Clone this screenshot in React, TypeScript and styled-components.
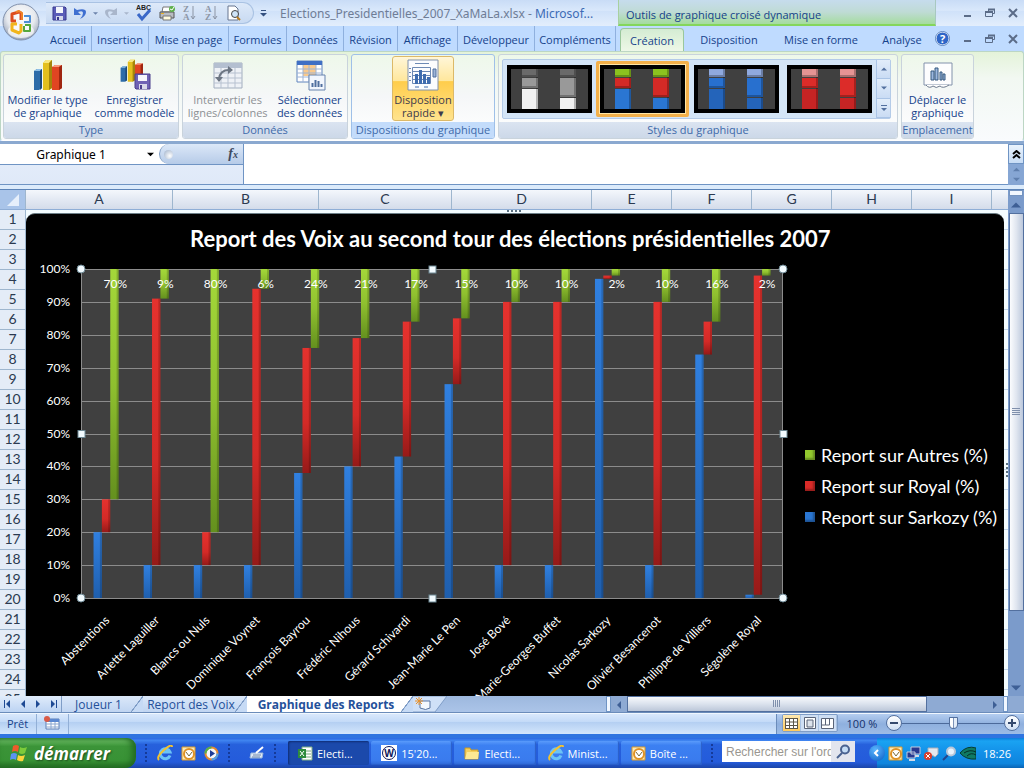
import { useState } from "react";
import type { ReactNode } from "react";
import styled, { createGlobalStyle, css } from "styled-components";

const ui = `"Open Sans", "Noto Sans", sans-serif`;
const sheetFont = `Lato, "Open Sans", sans-serif`;

const GlobalStyle = createGlobalStyle`
  * {
    box-sizing: border-box;
  }
  body {
    margin: 0;
    overflow: hidden;
    font-family: ${ui};
    font-size: 11px;
  }
  button,
  input {
    margin: 0;
    padding: 0;
    border: 0;
    background: none;
    color: inherit;
    font: inherit;
  }
  svg {
    display: block;
    flex: none;
  }
`;

const Window = styled.div`
  height: 100vh;
  display: flex;
  flex-direction: column;
  background: #bfdbff;
  color: #15428b;
`;

/* title bar */

const TitleBar = styled.header`
  position: relative;
  flex: none;
  height: 26px;
  display: flex;
  align-items: stretch;
  padding-left: 46px;
  background: linear-gradient(#c9dcf6, #d9e8fb 40%, #cfe1f9 42%, #e3eefc);
`;

const Orb = styled.button`
  position: absolute;
  left: 2px;
  top: 2px;
  z-index: 2;
`;

const QuickAccess = styled.div`
  width: 208px;
  height: 22px;
  margin-top: 2px;
  display: flex;
  align-items: center;
  gap: 6px;
  padding-left: 6px;
  border: 1px solid #a9c2e3;
  border-left: 0;
  border-radius: 0 11px 11px 0;
  background: linear-gradient(#dde9f9, #c8daf2);
`;

const QuickMore = styled.button`
  width: 18px;
  display: grid;
  place-items: center;
`;

const FileTitle = styled.h1`
  flex: 1;
  min-width: 0;
  margin: 0;
  padding-left: 8px;
  overflow: hidden;
  white-space: nowrap;
  font-family: "Noto Sans", sans-serif;
  font-size: 12px;
  font-weight: 400;
  line-height: 28px;
  color: #6f7d96;

  span {
    color: #3d6bb5;
  }
`;

const ContextTitle = styled.div`
  width: 318px;
  padding-left: 7px;
  border-left: 1px solid #a8d0a0;
  border-right: 1px solid #a8c8c0;
  border-bottom: 2px solid #84d65c;
  background: linear-gradient(#c6dced, #bfdbd5 50%, #a5dc9f);
  line-height: 29px;
`;

const WindowButtons = styled.div`
  width: 88px;
  flex: none;
  display: flex;
  align-items: center;
  justify-content: flex-end;
  gap: 13px;
  padding-right: 6px;
  color: #5b6c88;
`;

/* ribbon */

const TabBar = styled.nav`
  flex: none;
  height: 25px;
  display: flex;
  align-items: stretch;
  padding-left: 45px;
  background: #bfdbff;
  color: #15428b;

  ${WindowButtons} {
    margin-left: auto;
  }
`;

const Tab = styled.button<{ $width: number; $context?: boolean; $active?: boolean }>`
  width: ${(p) => p.$width}px;
  flex: none;
  padding-top: 2px;
  white-space: nowrap;
  ${(p) =>
    !p.$context &&
    css`
      border-right: 1px solid #8fb0de;
    `}
  ${(p) =>
    p.$active &&
    css`
      margin-top: 2px;
      padding-top: 0;
      border: 1px solid #9ac79c;
      border-bottom: 0;
      border-radius: 4px 4px 0 0;
      background: linear-gradient(#d4ecd3, #e1f2dc 50%, #eef8e8);
    `}
`;

const TabGap = styled.span`
  width: 5px;
`;

const Ribbon = styled.section`
  flex: none;
  height: 90px;
  display: flex;
  gap: 3px;
  padding: 2px 2px 1px;
  border: 1px solid #bcd6c4;
  border-bottom-color: #fff;
  border-radius: 3px;
  background: linear-gradient(#e4f3d9, #f2f8f2 30%, #f9fbfd);
`;

const Group = styled.div<{ $width: number; $hot?: boolean }>`
  width: ${(p) => p.$width}px;
  flex: none;
  display: flex;
  flex-direction: column;
  border: 1px solid ${(p) => (p.$hot ? "#9fc0e8" : "#c9d3dc")};
  border-radius: 3px;
  background: linear-gradient(#eef8ea, #f5f7f8 50%, #fff);
  overflow: hidden;
`;

const GroupBody = styled.div`
  flex: 1;
  display: flex;
  justify-content: space-around;
  align-items: flex-start;
  padding-top: 1px;
`;

const GroupLabel = styled.div<{ $hot?: boolean }>`
  height: 16px;
  line-height: 16px;
  text-align: center;
  white-space: nowrap;
  color: #3e6aaa;
  background: ${(p) => (p.$hot ? "#c3dcfb" : "linear-gradient(#dbe4f1, #ccd8e8)")};
`;

const BigButton = styled.button<{ $lit?: boolean; $off?: boolean }>`
  height: 65px;
  padding: 2px 1px 0;
  display: flex;
  flex-direction: column;
  align-items: center;
  justify-content: flex-start;
  gap: 2px;
  line-height: 13px;
  white-space: nowrap;
  border-radius: 3px;
  border: 1px solid transparent;
  color: ${(p) => (p.$off ? "#8d9094" : "#15428b")};
  ${(p) =>
    p.$lit &&
    css`
      color: #3c3a4c;
      border-color: #dcb968;
      background: linear-gradient(#fff6d8, #ffe79c 38%, #ffcd4b 39%, #ffe38e);
    `}
`;

const Gallery = styled.div`
  height: 60px;
  margin: 3px 6px 0 3px;
  flex: 1;
  display: flex;
  align-items: center;
  justify-content: space-between;
  border: 1px solid #b4cbe8;
  border-radius: 2px;
  background: #d4e5f7;
`;

const Thumb = styled.button<{ $selected?: boolean }>`
  padding: ${(p) => (p.$selected ? "1px" : "4px")};
  border: ${(p) => (p.$selected ? "3px solid #f3b04a" : "0")};
  border-radius: 2px;
  background: ${(p) => (p.$selected ? "#ffe6a6" : "none")};
`;

const GalleryButtons = styled.div`
  width: 14px;
  align-self: stretch;
  display: flex;
  flex-direction: column;

  button {
    flex: 1;
    display: grid;
    place-items: center;
    border-left: 1px solid #aac4e6;
    border-bottom: 1px solid #aac4e6;
    background: linear-gradient(#e2edfa, #cadcf4);
  }
`;

/* formula bar */

const FormulaBar = styled.section`
  flex: none;
  height: 48px;
  display: flex;
  border-top: 3px solid #8ba9d0;
  border-bottom: 4px solid #dcebfb;
  color: #000;
`;

const NameColumn = styled.div`
  width: 244px;
  flex: none;
  background: linear-gradient(#e6eefb, #dfe9f8);
  border-right: 1px solid #6f94c4;
  border-bottom: 1px solid #6f94c4;
`;

const NameRow = styled.div`
  height: 21px;
  display: flex;
  align-items: stretch;
  border-bottom: 1px solid #6f94c4;
  background: #fff;
`;

const NameInput = styled.input`
  width: 142px;
  text-align: center;
  font-family: "Noto Sans", sans-serif;
  font-size: 12px;
`;

const NameDrop = styled.button`
  width: 16px;
  display: grid;
  place-items: center;
`;

const FxArea = styled.div`
  flex: 1;
  margin-left: 1px;
  display: flex;
  align-items: center;
  justify-content: space-between;
  padding: 0 5px 0 4px;
  border-left: 1px solid #7f9dc4;
  border-radius: 11px 0 0 11px;
  background: linear-gradient(#dce8f8, #b6cbe8);
`;

const Knob = styled.span`
  width: 9px;
  height: 9px;
  border-radius: 50%;
  background: radial-gradient(circle at 65% 65%, #fff, #9badc7);
`;

const FxButton = styled.button`
  font-family: "Liberation Serif", serif;
  font-style: italic;
  font-weight: 700;
  font-size: 14px;
  color: #3d4a60;

  small {
    font-size: 10px;
  }
`;

const FormulaInput = styled.input`
  flex: 1;
  min-width: 0;
  background: #fff;
  border-bottom: 1px solid #6f94c4;
`;

const FormulaSide = styled.div`
  width: 16px;
  display: flex;
  flex-direction: column;
  background: #86a6d4;

  button {
    flex: 1;
    display: grid;
    place-items: center;
  }
  button:first-child {
    flex: none;
    height: 20px;
    border: 1px solid #6f94c4;
    background: linear-gradient(#eaf3fd, #c7dcf5);
  }
`;

/* worksheet */

const Sheet = styled.main`
  flex: 1;
  min-height: 0;
  display: flex;
  border-top: 1px solid #5c84b8;
`;

const SheetMain = styled.div`
  flex: 1;
  min-width: 0;
  display: flex;
  flex-direction: column;
  overflow: hidden;
  font-family: ${sheetFont};
  color: #2b3a50;
`;

const ColumnHeads = styled.div`
  flex: none;
  height: 20px;
  display: flex;
  border-bottom: 1px solid #8faed6;
  background: linear-gradient(#f4f7fc, #e3e9f3 50%, #d4dcea);
`;

const Corner = styled.div`
  width: 26px;
  flex: none;
  display: grid;
  place-items: center;
  border-right: 1px solid #9eb6ce;
  background: #a9c4e9;
`;

const ColumnHead = styled.div<{ $width: number }>`
  width: ${(p) => p.$width}px;
  flex: none;
  text-align: center;
  font-size: 14px;
  line-height: 18px;
  border-right: 1px solid #9eb6ce;
`;

const SheetBody = styled.div`
  flex: 1;
  min-height: 0;
  display: flex;
  overflow: hidden;
`;

const RowHeads = styled.div`
  width: 26px;
  flex: none;
  border-right: 1px solid #9eb6ce;
  background: #e4ecf7;
`;

const RowHead = styled.div`
  height: 20px;
  text-align: center;
  font-size: 14px;
  line-height: 18px;
  border-bottom: 1px solid #9eb6ce;
`;

const Cells = styled.div`
  position: relative;
  flex: 1;
  min-width: 0;
  padding: 3px 4px 0 0;
  background: repeating-linear-gradient(#f4fcff 0 19px, #c4d6ea 19px 20px);
`;

const FrameDots = styled.span<{ $side: "top" | "right" }>`
  position: absolute;
  ${(p) =>
    p.$side === "top"
      ? css`
          top: 0;
          left: 49%;
          width: 15px;
          height: 2px;
          background: repeating-linear-gradient(90deg, #5b7080 0 2px, transparent 2px 4px);
        `
      : css`
          right: 0;
          top: 52%;
          width: 2px;
          height: 15px;
          background: repeating-linear-gradient(#5b7080 0 2px, transparent 2px 4px);
        `}
`;

const Chart = styled.section`
  height: 520px;
  display: flex;
  flex-direction: column;
  border-top: 1px solid #6d7f88;
  border-radius: 9px 9px 0 0;
  background: #000;
  color: #fff;
`;

const ChartTitle = styled.h2`
  margin: 0;
  height: 46px;
  padding-left: 164px;
  line-height: 50px;
  font-size: 22px;
  font-weight: 700;
  white-space: nowrap;
`;

const ChartBody = styled.div`
  display: flex;
  align-items: flex-start;
`;

const Legend = styled.ul`
  margin: 179px 0 0;
  padding: 0 0 0 9px;
  list-style: none;
`;

const LegendItem = styled.li<{ $color: string }>`
  height: 31px;
  display: flex;
  align-items: center;
  gap: 6px;
  font-size: 18px;
  white-space: nowrap;

  &::before {
    content: "";
    width: 10px;
    height: 10px;
    background: ${(p) => p.$color};
    box-shadow: inset -2px -2px 2px rgba(0, 0, 0, 0.3);
  }
`;

const VScroll = styled.div`
  width: 16px;
  flex: none;
  display: flex;
  flex-direction: column;
  align-items: center;
  background: #7b9bcb;
`;

const SplitBox = styled.span`
  width: 14px;
  height: 6px;
  border: 1px solid #7594c0;
  background: #f1f7ff;
`;

const ArrowButton = styled.button`
  width: 16px;
  height: 17px;
  flex: none;
  display: grid;
  place-items: center;
`;

const VThumb = styled.div`
  width: 15px;
  flex: 398 0 0;
  display: grid;
  place-items: center;
  border: 1px solid #53709f;
  background: linear-gradient(90deg, #fbfcfe, #dfe5ef 50%, #bcc8dc);
`;

const VTrack = styled.div`
  flex: 68 0 0;
`;

/* sheet tabs */

const SheetTabs = styled.nav`
  flex: none;
  height: 17px;
  display: flex;
  align-items: stretch;
  background: linear-gradient(#9db8de, #abc4e8);
  border-bottom: 1px solid #6b8cba;
`;

const NavButtons = styled.div`
  width: 62px;
  flex: none;
  display: flex;
  justify-content: space-around;
  align-items: center;
  background: linear-gradient(#e0ecfb, #bcd3f3);
  border-right: 1px solid #7f9dc7;
`;

const SheetTab = styled.button<{ $width: number; $active?: boolean }>`
  position: relative;
  width: ${(p) => p.$width}px;
  flex: none;
  padding-right: 8px;
  font-size: 12px;
  line-height: 15px;
  white-space: nowrap;
  color: #24509a;
  font-weight: ${(p) => (p.$active ? 700 : 400)};
  background: ${(p) => (p.$active ? "#fff" : "linear-gradient(#dbe8f9, #c0d5f2)")};

  &::after {
    content: "";
    position: absolute;
    top: 0;
    right: 0;
    width: 12px;
    height: 100%;
    background: linear-gradient(
      to bottom right,
      transparent 47%,
      #7f9dc7 48%,
      #7f9dc7 53%,
      #c6daf5 54%
    );
  }
`;

const HScroll = styled.div`
  width: 418px;
  margin-left: auto;
  display: flex;
  align-items: stretch;
  background: #8eaad3;
`;

const HSplit = styled.span`
  width: 5px;
  border: 1px solid #6f94c4;
  background: #f1f7ff;
`;

const HCorner = styled.span`
  width: 16px;
`;

const HThumb = styled.div`
  flex: 295 0 0;
  display: grid;
  place-items: center;
  border: 1px solid #53709f;
  background: linear-gradient(#f7f9fc, #dbe2ed 50%, #bcc7d9);
`;

const HTrack = styled.div`
  flex: 60 0 0;
`;

/* status bar */

const StatusBar = styled.footer`
  flex: none;
  height: 21px;
  display: flex;
  align-items: stretch;
  border-top: 1px solid #f0f7ff;
  background: linear-gradient(#d9e8fc, #c3daf8 40%, #b4cff2 41%, #d3e6fc);
`;

const StatusCell = styled.div`
  display: flex;
  align-items: center;
  padding: 0 8px 2px 7px;
  border-right: 1px solid #92afd6;
`;

const StatusRight = styled.div`
  width: 248px;
  margin-left: auto;
  display: flex;
  align-items: center;
  border-left: 1px solid #6b8cba;
  padding: 0 4px 2px 5px;
  background: linear-gradient(#b4cdf0, #8fb0de 50%, #9dbce6);
`;

const Views = styled.div`
  display: flex;
  border: 1px solid #7f9dc7;
  border-radius: 2px;
`;

const ViewButton = styled.button<{ $on?: boolean }>`
  width: 18px;
  height: 16px;
  display: grid;
  place-items: center;
  border-right: 1px solid #a9c2e3;
  background: ${(p) => (p.$on ? "linear-gradient(#ffe9b0, #ffca5c)" : "#cfdff4")};
`;

const ZoomValue = styled.span`
  width: 48px;
  text-align: center;
  color: #15306b;
`;

const RoundButton = styled.button`
  width: 16px;
  height: 16px;
  flex: none;
  display: grid;
  place-items: center;
  border: 1px solid #53709f;
  border-radius: 50%;
  background: linear-gradient(#fff, #cfdff4);
`;

const ZoomRange = styled.input`
  flex: 1;
  min-width: 0;
  height: 16px;
  appearance: none;

  &::-webkit-slider-runnable-track {
    height: 1px;
    background: #4c6a9a;
  }
  &::-webkit-slider-thumb {
    appearance: none;
    width: 9px;
    height: 12px;
    margin-top: -6px;
    border: 1px solid #53709f;
    border-radius: 1px 1px 5px 5px;
    background: linear-gradient(90deg, #fff 45%, #7d93b8 46% 55%, #e4edf8 56%);
  }
`;

/* taskbar */

const TaskBar = styled.footer`
  flex: none;
  height: 34px;
  display: flex;
  align-items: stretch;
  border-top: 4px solid #2f74e0;
  background: linear-gradient(#2a68e2, #3f84f0 8%, #2660dc 22%, #245bdb 80%, #1c45a8);
  color: #fff;
`;

const StartButton = styled.button`
  width: 136px;
  flex: none;
  display: flex;
  align-items: center;
  gap: 6px;
  padding-left: 10px;
  border-radius: 0 9px 11px 0;
  background: linear-gradient(#4c9a4a, #62b55c 10%, #3b9438 28%, #389235 75%, #246e24);
  box-shadow: inset -4px 0 6px #226a22;
  font-size: 17px;
  font-weight: 700;
  font-style: italic;
  text-shadow: 1px 1px 2px #1d4a1d;
`;

const QuickLaunch = styled.div<{ $width: number }>`
  width: ${(p) => p.$width}px;
  flex: none;
  display: flex;
  align-items: center;
  justify-content: center;
  gap: 8px;
`;

const Grip = styled.span`
  width: 5px;
  height: 20px;
  flex: none;
  background: radial-gradient(circle, #153a99 1px, transparent 1px) 0 0 / 4px 4px;
`;

const Tasks = styled.div`
  width: 416px;
  flex: none;
  display: flex;
  gap: 2px;
  padding: 3px 0 3px 2px;
`;

const Task = styled.button<{ $active?: boolean }>`
  flex: 1;
  min-width: 0;
  display: flex;
  align-items: center;
  gap: 4px;
  padding-left: 10px;
  white-space: nowrap;
  border-radius: 2px;
  background: ${(p) =>
    p.$active ? "#1b49ab" : "linear-gradient(#5a9bfb, #3c80f2 18%, #3a7bee 80%, #2e68d6)"};
  box-shadow: ${(p) => (p.$active ? "inset 1px 1px 2px #102d74" : "inset -1px -1px 1px #2b5fc8")};
`;

const SearchBox = styled.div`
  flex: 1;
  min-width: 0;
  display: flex;
  margin: 3px 22px 6px 0;

  input {
    flex: 1;
    min-width: 0;
    padding-left: 4px;
    background: #fff;
    color: #333;
    font-family: "Liberation Sans", sans-serif;
    font-size: 12px;
  }
  input::placeholder {
    color: #9a9790;
  }
  button {
    width: 24px;
    display: grid;
    place-items: center;
    background: #e3e5ee;
  }
`;

const Tray = styled.div`
  position: relative;
  width: 147px;
  flex: none;
  display: flex;
  align-items: center;
  gap: 3px;
  padding-left: 11px;
  background: linear-gradient(#0c7ddb, #1aa3f2 10%, #128fe8 50%, #0f85dd 85%, #0b64b4);
`;

const TrayArrow = styled.button`
  position: absolute;
  left: -8px;
  width: 16px;
  height: 16px;
  display: grid;
  place-items: center;
  border-radius: 50%;
  background: radial-gradient(circle at 40% 30%, #5ab6ff, #0b5cc4);
`;

const Clock = styled.time`
  margin-left: auto;
  padding-right: 13px;
`;

/* icons */

const Svg = ({ w, h = w, children }: { w: number; h?: number; children: ReactNode }) => (
  <svg width={w} height={h} viewBox={`0 0 ${w} ${h}`} aria-hidden="true">
    {children}
  </svg>
);

type ArrowProps = { dir?: string; color?: string; size?: number };

const Arrow = ({ dir = "down", color = "#53709f", size = 7 }: ArrowProps) => {
  const turn: Record<string, number> = { down: 0, left: 90, up: 180, right: 270 };
  return (
    <svg width={size} height={size} viewBox="0 0 8 8" aria-hidden="true">
      <path d="M0 2h8L4 6z" fill={color} transform={`rotate(${turn[dir]} 4 4)`} />
    </svg>
  );
};

const OfficeOrb = () => (
  <svg width="39" height="40" viewBox="0 0 39 40" aria-hidden="true">
    <defs>
      <radialGradient id="orb" cx="50%" cy="35%" r="65%">
        <stop offset="0" stopColor="#fff" />
        <stop offset="0.6" stopColor="#e6e9ee" />
        <stop offset="1" stopColor="#98a3b6" />
      </radialGradient>
    </defs>
    <circle cx="19" cy="20" r="18" fill="url(#orb)" stroke="#8090ac" />
    <ellipse cx="19" cy="29" rx="13" ry="7" fill="#fff" opacity="0.7" />
    <g fill="none" strokeWidth="3" strokeLinejoin="round">
      <path d="M14 19h-4v-7l7-2 2 1v7" stroke="#dd4b1c" />
      <path d="M14 10l3-1 3 2v7" stroke="#ee8125" strokeWidth="2" />
      <path d="M22 14h6v6h-6" stroke="#4f8fd6" strokeWidth="2" />
      <path d="M15 22h-5v6l7 3 2-2v-7" stroke="#f2b51b" />
      <path d="M23 23h5v6h-6v-5" stroke="#56a83c" strokeWidth="2" />
    </g>
  </svg>
);

const Floppy = () => (
  <Svg w={15}>
    <path d="M1 1h12l1 1v12H1z" fill="#5a5cb8" stroke="#38398e" />
    <path d="M4 1h7v6H4z" fill="#f4f6fc" />
    <path d="M4 10h7v4H4z" fill="#d4d8ea" />
    <path d="M5 11h2v3H5z" fill="#38398e" />
  </Svg>
);

const Undo = ({ color, flip }: { color: string; flip?: boolean }) => (
  <Svg w={14}>
    <g transform={flip ? "matrix(-1 0 0 1 14 0)" : undefined}>
      <path d="M1 2v7h7L5 6q5-2 5 1t-3 6q6-3 6-7T4 4z" fill={color} />
    </g>
  </Svg>
);

const Spelling = () => (
  <Svg w={18}>
    <text x="1" y="6" fontSize="7" fontWeight="700" fontFamily="Liberation Sans" fill="#222">
      ABC
    </text>
    <path d="M3 10l4 5 8-9" fill="none" stroke="#3a68c8" strokeWidth="3" />
  </Svg>
);

const Printer = () => (
  <Svg w={17}>
    <path d="M4 2h8l1 5H3z" fill="#fff" stroke="#777" />
    <path d="M1 7h14v6H1z" fill="#b9bcc2" stroke="#555" />
    <path d="M4 11h8v4H4z" fill="#fffbe0" stroke="#777" />
    <circle cx="13" cy="4" r="3" fill="#5db04a" />
    <path d="M11 4l2 1 2-3" fill="none" stroke="#fff" />
    <path d="M2 8h3v1H2z" fill="#e8b022" />
  </Svg>
);

const Sort = ({ top, bottom }: { top: string; bottom: string }) => (
  <Svg w={16}>
    <g fontSize="9" fontFamily="Liberation Serif" fontWeight="700" fill="#8c95a5">
      <text x="1" y="7">
        {top}
      </text>
      <text x="1" y="15">
        {bottom}
      </text>
    </g>
    <path d="M11 1v13M9 11l2 3 2-3" fill="none" stroke="#8c95a5" />
  </Svg>
);

const Preview = () => (
  <Svg w={16}>
    <path d="M2 1h7l3 3v11H2z" fill="#fff" stroke="#66758f" />
    <circle cx="9" cy="9" r="3.5" fill="#cfe4f8" stroke="#444" />
    <path d="M11 12l3 3" stroke="#b87b1f" strokeWidth="2" />
  </Svg>
);

const Minimize = () => (
  <Svg w={9}>
    <path d="M1 7h7" stroke="currentColor" strokeWidth="2" />
  </Svg>
);

const Restore = () => (
  <Svg w={10}>
    <path d="M3.5 4V1.5h6v4H7.5M.5 3.5h7v5h-7z" fill="none" stroke="currentColor" />
    <path d="M3 1.5h7M0 4h8" stroke="currentColor" strokeWidth="2" />
  </Svg>
);

const Close = () => (
  <Svg w={10}>
    <path d="M1 1l8 8M9 1L1 9" stroke="currentColor" strokeWidth="2" />
  </Svg>
);

const Help = () => (
  <Svg w={15}>
    <circle cx="7.5" cy="7.5" r="6.5" fill="#2f66c8" stroke="#fff" />
    <circle cx="7.5" cy="7.5" r="7" fill="none" stroke="#5c84c0" />
    <text x="7.5" y="11.5" fontSize="11" fontWeight="700" textAnchor="middle" fill="#fff">
      ?
    </text>
  </Svg>
);

const Columns = () => (
  <>
    <path d="M2 12l3-2h5v19l-3 2H2z" fill="#2d6ca8" />
    <path d="M2 12l3-2h5l-2 2z" fill="#8fc0e6" />
    <path d="M8 12l2-2v19l-2 2z" fill="#1c4a7c" />
    <path d="M20 8l3-2h7v23l-3 2h-7z" fill="#e04522" />
    <path d="M20 8l3-2h7l-3 2z" fill="#f79a7c" />
    <path d="M27 8l3-2v23l-3 2z" fill="#9f2610" />
    <path d="M11 4l3-3h6v28l-3 2h-6z" fill="#e3bf1e" />
    <path d="M11 4l3-3h6l-3 3z" fill="#f8e780" />
    <path d="M17 4l3-3v28l-3 2z" fill="#a3850c" />
  </>
);

const ChartType = () => (
  <Svg w={32}>
    <Columns />
  </Svg>
);

const SaveTemplate = () => (
  <Svg w={32}>
    <g transform="scale(0.8 0.73)">
      <Columns />
    </g>
    <g transform="translate(16 15)">
      <path d="M0 0h15v15H1l-1-1z" fill="#6f62b4" stroke="#4a3f8c" />
      <path d="M3 1h9v6H3z" fill="#f6f6fb" />
      <path d="M4 10h8v5H4z" fill="#d8d8e8" />
      <path d="M5 11h2v4H5z" fill="#4a3f8c" />
    </g>
  </Svg>
);

const SwitchRows = () => (
  <Svg w={32}>
    <path d="M2 4h28v25H2z" fill="#eef1f6" stroke="#a3aebf" />
    <path d="M2 4h28v5H2z" fill="#b4bfd0" />
    <path d="M2 14h28M2 19h28M2 24h28M9 9v20M16 9v20M23 9v20" stroke="#b7c1d0" />
    <path d="M7 20q1-9 10-9" fill="none" stroke="#6d7683" strokeWidth="2" />
    <path d="M16 7l5 4-5 4zM3 18h8l-4 5z" fill="#6d7683" />
  </Svg>
);

const SelectData = () => (
  <Svg w={32}>
    <path d="M3 2h25v21H3z" fill="#fff" stroke="#5f83bd" />
    <path d="M3 2h25v4H3z" fill="#3f6fc4" />
    <path d="M9 6h13v11H9z" fill="#f9c98c" />
    <path d="M3 10h25M3 14h25M3 18h25M9 6v17M15 6v17M22 6v17" stroke="#9db4d6" />
    <path d="M15 16h16v15H15z" fill="#f1f6fd" stroke="#6683ad" />
    <path d="M18.5 28v-4M21.5 28v-7M24.5 28v-6M27.5 28v-3" stroke="#4f6f9e" strokeWidth="2" />
  </Svg>
);

const QuickLayout = () => (
  <Svg w={32}>
    <path d="M1 1h30v30H1z" fill="#fbfcfe" stroke="#8292ab" />
    <path d="M8 4.5h14M2 9.5h2M2 13.5h2M2 17.5h2M2 21.5h2" stroke="#6d89b4" />
    <path d="M5.5 8.5v16h18v-16zM5 12.5h18M5 16.5h18M5 20.5h18" fill="none" stroke="#6d89b4" />
    <path d="M8 15h3v10H8zM12 11h3v14h-3zM16 15h3v10h-3zM20 18h3v7h-3z" fill="#3f6cae" />
    <path d="M26 10h3v8h-3z" fill="#9db4d6" stroke="#4f6f9e" />
    <path d="M8 28h4M17 28h4" stroke="#3f6cae" />
  </Svg>
);

const MoveChart = () => (
  <Svg w={32}>
    <path d="M2 4h28v22H2z" fill="#fdfdfe" stroke="#8292ab" />
    <path d="M4 26q3 4 7 1 3 3 7 0 3 3 9-1" fill="#fff" stroke="#6d7a8e" />
    <path d="M9 12h3v9H9zM13 9h3v12h-3zM18 13h2v8h-2zM21 15h2v6h-2z" fill="#9db8de" stroke="#35597f" />
  </Svg>
);

type Stack = [string, string, string];

const thumbs: Stack[] = [
  ["#6a6a6a", "#999", "#f1f1f1"],
  ["#8cc21f", "#d42a26", "#2a76d2"],
  ["#8fa9de", "#2870cf", "#2464ba"],
  ["#e59494", "#dc2c29", "#c62424"],
];

const StyleThumb = ({ colors }: { colors: Stack }) => (
  <Svg w={85} h={48}>
    <path d="M0 0h85v48H0z" />
    <path d="M4 4h77v40H4z" fill="#404040" />
    <path d="M15 4h16v8H15zM53 4h16v8H53z" fill={colors[0]} />
    <path d="M15 13h16v10H15zM53 13h16v19H53z" fill={colors[1]} />
    <path d="M15 24h16v20H15zM53 33h16v11H53z" fill={colors[2]} />
    <path
      d="M15 10h16v2H15zM53 10h16v2H53zM15 21h16v2H15zM53 30h16v2H53zM29 4h2v40h-2zM67 4h2v40h-2z"
      opacity="0.25"
    />
  </Svg>
);

const XpFlag = () => (
  <Svg w={18}>
    <path d="M3 2q3-2 6 0L8 8Q5 6 2 8z" fill="#ef5b2b" />
    <path d="M10 3q3 2 7 0l-2 6q-3 2-6 0z" fill="#7ccb3a" />
    <path d="M1 10q3-2 6 0l-1 6q-3-2-6 0z" fill="#5b93f2" />
    <path d="M8 11q3 2 7 0l-2 6q-3 1-6-1z" fill="#fbd53b" />
  </Svg>
);

const Explorer = () => (
  <Svg w={16}>
    <path d="M13 10.5A5 5 0 1 1 13 7H5" fill="none" stroke="#6cc4f5" strokeWidth="3" />
    <path d="M2 15Q-1 12 7 5t8-3" fill="none" stroke="#f2c230" strokeWidth="2" />
  </Svg>
);

const Outlook = () => (
  <Svg w={15}>
    <path d="M1 1h13v13H1z" fill="#fbe9b8" stroke="#d99a2b" />
    <circle cx="8" cy="8" r="5" fill="#fff" stroke="#e09225" strokeWidth="2" />
    <path d="M5 6l3 4 3-4" fill="none" stroke="#7a6a38" />
  </Svg>
);

const MediaPlayer = () => (
  <Svg w={15}>
    <circle cx="7.5" cy="7.5" r="6" fill="#f4f7fc" stroke="#e48a30" strokeWidth="2" />
    <path d="M1.5 7.5a6 6 0 0 1 6-6" fill="none" stroke="#54b04c" strokeWidth="2" />
    <path d="M7.5 13.5a6 6 0 0 0 6-6" fill="none" stroke="#4fa0ea" strokeWidth="2" />
    <path d="M6 4l5 3.5L6 11z" fill="#1d3c96" />
  </Svg>
);

const Desktop = () => (
  <Svg w={16}>
    <path d="M2 8h12l-1 5H1z" fill="#dfe9f5" stroke="#9db8da" />
    <path d="M4 10h8M3 12h8" stroke="#6c87ad" />
    <path d="M7 8l7-6" stroke="#fff" strokeWidth="2" />
  </Svg>
);

const ExcelDoc = () => (
  <Svg w={15}>
    <path d="M4 1h10v13H4z" fill="#fff" stroke="#7fae84" />
    <path d="M8 5h5M8 8h5M8 11h5" stroke="#79a77d" />
    <path d="M0 3h8v9H0z" fill="#2e8b3d" />
    <path d="M2 5l4 5M6 5l-4 5" stroke="#fff" />
  </Svg>
);

const WDoc = () => (
  <Svg w={16}>
    <path d="M0 0h16v16H0z" fill="#fff" />
    <circle cx="8" cy="8" r="6.5" fill="none" stroke="#111a5c" />
    <text x="8" y="12" fontSize="10" fontWeight="700" textAnchor="middle" fill="#111a5c">
      W
    </text>
  </Svg>
);

const Folder = () => (
  <Svg w={16}>
    <path d="M1 3h5l1 2h7v9H1z" fill="#f4cf5c" stroke="#c99a27" />
    <path d="M3 7h12l-1 7H1z" fill="#fce894" />
  </Svg>
);

const Magnifier = ({ light }: { light?: boolean }) => (
  <Svg w={15}>
    <path d="M6 9l-5 5" stroke={light ? "#24448c" : "#4a6290"} strokeWidth="2" />
    <circle
      cx="9"
      cy="5.5"
      r="4"
      fill={light ? "#e8f3fc" : "#c5dcf5"}
      stroke={light ? "#b9c7d8" : "#4a6290"}
      strokeWidth="2"
    />
  </Svg>
);

const Network = () => (
  <Svg w={15}>
    <path d="M5 1h9v7H5zM1 6h8v6H1z" fill="#27388f" stroke="#c2cbe0" />
    <path d="M3 14h6M9 10h4" stroke="#d4dae8" strokeWidth="2" />
  </Svg>
);

const Muted = () => (
  <Svg w={15}>
    <path d="M4 2h10v6l-3 3-3-2H4z" fill="#e5e8ee" stroke="#a7adb8" />
    <circle cx="4" cy="10" r="4" fill="#dc3d2a" />
    <path d="M2 8l4 4M6 8l-4 4" stroke="#fff" />
  </Svg>
);

const Wave = () => (
  <Svg w={16}>
    <path d="M0 8q7-8 16-5v11Q6 15 0 8z" fill="#0f7a63" stroke="#063c33" />
    <path d="M4 8q6-4 12-1M7 11q4-4 9-1" fill="none" stroke="#052f29" />
  </Svg>
);

const MacroIcon = () => (
  <Svg w={16} h={14}>
    <path d="M2 3h13v10H2z" fill="#fff" stroke="#5c7fb5" />
    <path d="M2 3h13v3H2z" fill="#5c88d0" />
    <path d="M2 8h13M2 11h13M7 6v7M11 6v7" stroke="#8ba6cf" />
    <circle cx="3" cy="3" r="3" fill="#d95a48" />
  </Svg>
);

const NewSheet = () => (
  <Svg w={34} h={16}>
    <path d="M-2 0h36L22 16H-2z" fill="#cfe0f7" stroke="#7f9dc7" />
    <path d="M7 5h10v7q-4 3-10 0z" fill="#f4f8fe" stroke="#5874a2" />
    <path d="M6 1v8M2 5h8M3 2l6 6M9 2L3 8" stroke="#e8922c" />
  </Svg>
);

/* chart */

const BLUE = "#2a76d2";
const RED = "#d92b28";
const GREEN = "#93c92e";

// [name, Sarkozy, Royal, label of the remainder]
const votes: [string, number, number, string][] = [
  ["Abstentions", 20, 10, "70%"],
  ["Arlette Laguiller", 10, 81, "9%"],
  ["Blancs ou Nuls", 10, 10, "80%"],
  ["Dominique Voynet", 10, 84, "6%"],
  ["François Bayrou", 38, 38, "24%"],
  ["Frédéric Nihous", 40, 39, "21%"],
  ["Gérard Schivardi", 43, 41, "17%"],
  ["Jean-Marie Le Pen", 65, 20, "15%"],
  ["José Bové", 10, 80, "10%"],
  ["Marie-Georges Buffet", 10, 80, "10%"],
  ["Nicolas Sarkozy", 97, 1, "2%"],
  ["Olivier Besancenot", 10, 80, "10%"],
  ["Philippe de Villiers", 74, 10, "16%"],
  ["Ségolène Royal", 1, 97, "2%"],
];

const LEFT = 55;
const TOP = 9;
const WIDTH = 702;
const HEIGHT = 329;
const STEP = WIDTH / votes.length;
const BAR = STEP / 6;

const yOf = (v: number) => TOP + HEIGHT - (HEIGHT * v) / 100;

const Plot = () => (
  <svg width="770" height="450" fontFamily="Lato, sans-serif" fill="#fff" role="img" aria-label="Report des Voix">
    <defs>
      <linearGradient id="blueFill" x2="0" y2="1">
        <stop offset="0" stopColor="#3080e0" />
        <stop offset="1" stopColor="#1f5fae" />
      </linearGradient>
      <linearGradient id="redFill" x2="0" y2="1">
        <stop offset="0" stopColor="#e5322e" />
        <stop offset="0.6" stopColor="#d42a27" />
        <stop offset="1" stopColor="#961a18" />
      </linearGradient>
      <linearGradient id="greenFill" x2="0" y2="1">
        <stop offset="0" stopColor="#a4d83a" />
        <stop offset="0.5" stopColor="#8fc02f" />
        <stop offset="1" stopColor="#64901e" />
      </linearGradient>
    </defs>
    <rect x={LEFT} y={TOP} width={WIDTH} height={HEIGHT} fill="#404040" />
    {Array.from({ length: 11 }, (_, i) => (
      <g key={i}>
        <path d={`M${LEFT} ${Math.round(yOf(i * 10)) + 0.5}h${WIDTH}`} stroke="#8c8c8c" />
        <text x="44" y={yOf(i * 10) + 4} fontSize="12" textAnchor="end">
          {i * 10}%
        </text>
      </g>
    ))}
    <path d={`M${LEFT + 0.5} ${TOP}v${HEIGHT}M${LEFT + WIDTH - 0.5} ${TOP}v${HEIGHT}`} stroke="#8c8c8c" />
    {votes.map(([name, sarkozy, royal, label], i) => {
      const x = LEFT + i * STEP + BAR * 1.5;
      const bars = [
        { from: 0, to: sarkozy, fill: "url(#blueFill)" },
        { from: sarkozy, to: sarkozy + royal, fill: "url(#redFill)" },
        { from: sarkozy + royal, to: 100, fill: "url(#greenFill)" },
      ];
      return (
        <g key={name}>
          {bars.map((b, n) => {
            const height = yOf(b.from) - yOf(b.to);
            return (
              <g key={b.fill}>
                <rect x={x + n * BAR} y={yOf(b.to)} width={BAR} height={height} fill={b.fill} />
                <rect
                  x={x + n * BAR + BAR - 2}
                  y={yOf(b.to)}
                  width="2"
                  height={height}
                  fill="#000"
                  opacity="0.18"
                />
              </g>
            );
          })}
          <text x={x + BAR * 2.6} y={TOP + 19} fontSize="12" textAnchor="middle">
            {label}
          </text>
          <text
            fontSize="12"
            textAnchor="end"
            transform={`translate(${LEFT + (i + 0.5) * STEP + 4} ${TOP + HEIGHT + 23}) rotate(-45)`}
          >
            {name}
          </text>
        </g>
      );
    })}
    <g fill="#f2fbff" stroke="#6d8894">
      {[TOP, TOP + HEIGHT].map((y) => (
        <g key={y}>
          <circle cx={LEFT} cy={y} r="4" />
          <circle cx={LEFT + WIDTH} cy={y} r="4" />
          <rect x={LEFT + WIDTH / 2 - 3} y={y - 3} width="7" height="7" />
        </g>
      ))}
      <rect x={LEFT - 3} y={TOP + HEIGHT / 2 - 3} width="7" height="7" />
      <rect x={LEFT + WIDTH - 3} y={TOP + HEIGHT / 2 - 3} width="7" height="7" />
    </g>
  </svg>
);

const tabs: [string, number][] = [
  ["Accueil", 47],
  ["Insertion", 57],
  ["Mise en page", 80],
  ["Formules", 58],
  ["Données", 57],
  ["Révision", 54],
  ["Affichage", 60],
  ["Développeur", 77],
  ["Compléments", 81],
];

const contextTabs: [string, number][] = [
  ["Création", 64],
  ["Disposition", 90],
  ["Mise en forme", 94],
  ["Analyse", 68],
];

const columns: [string, number][] = [
  ["A", 147],
  ["B", 146],
  ["C", 133],
  ["D", 140],
  ["E", 80],
  ["F", 80],
  ["G", 80],
  ["H", 80],
  ["I", 80],
];

const App = () => {
  const [tab, setTab] = useState("Création");
  const [thumb, setThumb] = useState(1);
  const [name, setName] = useState("Graphique 1");
  const [zoom, setZoom] = useState(100);

  return (
    <Window>
      <GlobalStyle />
      <TitleBar>
        <Orb aria-label="Bouton Office">
          <OfficeOrb />
        </Orb>
        <QuickAccess>
          <Floppy />
          <Undo color="#3f6fd0" />
          <Arrow color="#6c83ab" size={5} />
          <Undo color="#a9b6cb" flip />
          <Arrow color="#a9b6cb" size={5} />
          <Spelling />
          <Printer />
          <Sort top="Z" bottom="A" />
          <Sort top="A" bottom="Z" />
          <Preview />
        </QuickAccess>
        <QuickMore aria-label="Personnaliser">
          <Svg w={7} h={8}>
            <path d="M1 1h5v1H1zM0 4h7L3.5 7.5z" fill="#34507f" />
          </Svg>
        </QuickMore>
        <FileTitle>
          Elections_Presidentielles_2007_XaMaLa.xlsx - <span>Microsof...</span>
        </FileTitle>
        <ContextTitle>Outils de graphique croisé dynamique</ContextTitle>
        <WindowButtons>
          <Minimize />
          <Restore />
          <Close />
        </WindowButtons>
      </TitleBar>

      <TabBar>
        {tabs.map(([label, width]) => (
          <Tab key={label} $width={width} onClick={() => setTab(label)} $active={tab === label}>
            {label}
          </Tab>
        ))}
        <TabGap />
        {contextTabs.map(([label, width]) => (
          <Tab key={label} $width={width} $context onClick={() => setTab(label)} $active={tab === label}>
            {label}
          </Tab>
        ))}
        <WindowButtons>
          <Help />
          <Minimize />
          <Restore />
          <Close />
        </WindowButtons>
      </TabBar>

      <Ribbon>
        <Group $width={176}>
          <GroupBody>
            <BigButton>
              <ChartType />
              <span>
                Modifier le type
                <br />
                de graphique
              </span>
            </BigButton>
            <BigButton>
              <SaveTemplate />
              <span>
                Enregistrer
                <br />
                comme modèle
              </span>
            </BigButton>
          </GroupBody>
          <GroupLabel>Type</GroupLabel>
        </Group>
        <Group $width={166}>
          <GroupBody>
            <BigButton $off>
              <SwitchRows />
              <span>
                Intervertir les
                <br />
                lignes/colonnes
              </span>
            </BigButton>
            <BigButton>
              <SelectData />
              <span>
                Sélectionner
                <br />
                des données
              </span>
            </BigButton>
          </GroupBody>
          <GroupLabel>Données</GroupLabel>
        </Group>
        <Group $width={144} $hot>
          <GroupBody>
            <BigButton $lit>
              <QuickLayout />
              <span>
                Disposition
                <br />
                rapide ▾
              </span>
            </BigButton>
          </GroupBody>
          <GroupLabel $hot>Dispositions du graphique</GroupLabel>
        </Group>
        <Group $width={400}>
          <GroupBody>
            <Gallery>
              {thumbs.map((colors, i) => (
                <Thumb key={i} $selected={thumb === i} onClick={() => setThumb(i)} aria-label={`Style ${i + 1}`}>
                  <StyleThumb colors={colors} />
                </Thumb>
              ))}
              <GalleryButtons>
                <button aria-label="Haut">
                  <Arrow dir="up" size={6} />
                </button>
                <button aria-label="Bas">
                  <Arrow size={6} />
                </button>
                <button aria-label="Autres">
                  <Svg w={8}>
                    <path d="M1 1h6v1H1zM1 4h6L4 7z" fill="#53709f" />
                  </Svg>
                </button>
              </GalleryButtons>
            </Gallery>
          </GroupBody>
          <GroupLabel>Styles du graphique</GroupLabel>
        </Group>
        <Group $width={73}>
          <GroupBody>
            <BigButton>
              <MoveChart />
              <span>
                Déplacer le
                <br />
                graphique
              </span>
            </BigButton>
          </GroupBody>
          <GroupLabel>Emplacement</GroupLabel>
        </Group>
      </Ribbon>

      <FormulaBar>
        <NameColumn>
          <NameRow>
            <NameInput aria-label="Zone Nom" value={name} onChange={(e) => setName(e.target.value)} />
            <NameDrop aria-label="Noms">
              <Arrow color="#000" />
            </NameDrop>
            <FxArea>
              <Knob />
              <FxButton>
                f<small>x</small>
              </FxButton>
            </FxArea>
          </NameRow>
        </NameColumn>
        <FormulaInput aria-label="Barre de formule" />
        <FormulaSide>
          <button aria-label="Développer">
            <Svg w={9}>
              <path d="M1 4l3.5-3L8 4M1 8l3.5-3L8 8" fill="none" stroke="#000" strokeWidth="2" />
            </Svg>
          </button>
          <button aria-label="Monter">
            <Arrow dir="up" color="#5f7fae" />
          </button>
          <button aria-label="Descendre">
            <Arrow color="#5f7fae" />
          </button>
        </FormulaSide>
      </FormulaBar>

      <Sheet>
        <SheetMain>
          <ColumnHeads>
            <Corner>
              <Svg w={14}>
                <path d="M13 1v12H1z" fill="#e6effb" />
              </Svg>
            </Corner>
            {columns.map(([label, width]) => (
              <ColumnHead key={label} $width={width}>
                {label}
              </ColumnHead>
            ))}
          </ColumnHeads>
          <SheetBody>
            <RowHeads>
              {Array.from({ length: 25 }, (_, i) => (
                <RowHead key={i}>{i + 1}</RowHead>
              ))}
            </RowHeads>
            <Cells>
              <FrameDots $side="top" />
              <FrameDots $side="right" />
              <Chart>
                <ChartTitle>Report des Voix au second tour des élections présidentielles 2007</ChartTitle>
                <ChartBody>
                  <Plot />
                  <Legend>
                    <LegendItem $color={GREEN}>Report sur Autres (%)</LegendItem>
                    <LegendItem $color={RED}>Report sur Royal (%)</LegendItem>
                    <LegendItem $color={BLUE}>Report sur Sarkozy (%)</LegendItem>
                  </Legend>
                </ChartBody>
              </Chart>
            </Cells>
          </SheetBody>
        </SheetMain>
        <VScroll>
          <SplitBox />
          <ArrowButton aria-label="Monter">
            <Arrow dir="up" color="#3e5f95" size={10} />
          </ArrowButton>
          <VThumb>
            <Svg w={8}>
              <path d="M0 .5h8M0 2.5h8M0 4.5h8M0 6.5h8" stroke="#8090ac" />
            </Svg>
          </VThumb>
          <VTrack />
          <ArrowButton aria-label="Descendre">
            <Arrow color="#3e5f95" size={10} />
          </ArrowButton>
        </VScroll>
      </Sheet>

      <SheetTabs>
        <NavButtons>
          {["left", "left", "right", "right"].map((dir, i) => (
            <button key={i} aria-label={`Défilement ${i + 1}`}>
              <Svg w={9}>
                <path d={dir === "left" ? "M7 0v8L3 4z" : "M2 0v8l4-4z"} fill="#1f4a94" />
                {i === 0 && <path d="M1 0h1v8H1z" fill="#1f4a94" />}
                {i === 3 && <path d="M7 0h1v8H7z" fill="#1f4a94" />}
              </Svg>
            </button>
          ))}
        </NavButtons>
        <SheetTab $width={81}>Joueur 1</SheetTab>
        <SheetTab $width={104}>Report des Voix</SheetTab>
        <SheetTab $width={166} $active>
          Graphique des Reports
        </SheetTab>
        <NewSheet />
        <HScroll>
          <HSplit />
          <ArrowButton aria-label="Gauche">
            <Arrow dir="left" color="#3e5f95" size={8} />
          </ArrowButton>
          <HThumb>
            <Svg w={8}>
              <path d="M.5 0v7M2.5 0v7M4.5 0v7M6.5 0v7" stroke="#8090ac" />
            </Svg>
          </HThumb>
          <HTrack />
          <ArrowButton aria-label="Droite">
            <Arrow dir="right" color="#3e5f95" size={8} />
          </ArrowButton>
          <HSplit />
          <HCorner />
        </HScroll>
      </SheetTabs>

      <StatusBar>
        <StatusCell>Prêt</StatusCell>
        <StatusCell>
          <MacroIcon />
        </StatusCell>
        <StatusRight>
          <Views>
            <ViewButton $on aria-label="Normal">
              <Svg w={13} h={11}>
                <path d="M0 0h13v11H0z" fill="#fff" />
                <path d="M0 .5h13M0 4h13M0 7.5h13M0 10.5h13M.5 0v11M4.5 0v11M8.5 0v11M12.5 0v11" stroke="#5c5648" />
              </Svg>
            </ViewButton>
            <ViewButton aria-label="Mise en page">
              <Svg w={12}>
                <path d="M.5.5h11v11H.5z" fill="#fff" stroke="#5a6478" />
                <path d="M3 3h6v7H3z" fill="#dde3ec" stroke="#5a6478" />
              </Svg>
            </ViewButton>
            <ViewButton aria-label="Sauts de page">
              <Svg w={13} h={11}>
                <path d="M.5.5h12v10H.5z" fill="#fff" stroke="#5a6478" />
                <path d="M4.5 0v7h4V0M4.500 7H0" fill="none" stroke="#5a6478" />
              </Svg>
            </ViewButton>
          </Views>
          <ZoomValue>{zoom} %</ZoomValue>
          <RoundButton aria-label="Zoom arrière">
            <Svg w={8}>
              <path d="M0 4h8" stroke="#34496e" strokeWidth="2" />
            </Svg>
          </RoundButton>
          <ZoomRange
            type="range"
            aria-label="Zoom"
            min={0}
            max={200}
            value={zoom}
            onChange={(e) => setZoom(Number(e.target.value))}
          />
          <RoundButton aria-label="Zoom avant">
            <Svg w={8}>
              <path d="M0 4h8M4 0v8" stroke="#34496e" strokeWidth="2" />
            </Svg>
          </RoundButton>
        </StatusRight>
      </StatusBar>

      <TaskBar>
        <StartButton>
          <XpFlag />
          démarrer
        </StartButton>
        <QuickLaunch $width={104}>
          <Grip />
          <Explorer />
          <Outlook />
          <MediaPlayer />
          <Grip />
        </QuickLaunch>
        <QuickLaunch $width={46}>
          <Desktop />
          <Grip />
        </QuickLaunch>
        <Tasks>
          <Task $active>
            <ExcelDoc />
            Electi...
          </Task>
          <Task>
            <WDoc />
            15'20...
          </Task>
          <Task>
            <Folder />
            Electi...
          </Task>
          <Task>
            <Explorer />
            Minist...
          </Task>
          <Task>
            <Outlook />
            Boîte ...
          </Task>
        </Tasks>
        <QuickLaunch $width={20}>
          <Grip />
        </QuickLaunch>
        <SearchBox>
          <input placeholder="Rechercher sur l'ordinateur" aria-label="Rechercher" />
          <button aria-label="Lancer la recherche">
            <Magnifier />
          </button>
        </SearchBox>
        <Tray>
          <TrayArrow aria-label="Afficher les icônes">
            <Svg w={8}>
              <path d="M5 1L2 4l3 3" fill="none" stroke="#fff" strokeWidth="2" />
            </Svg>
          </TrayArrow>
          <Outlook />
          <Network />
          <Muted />
          <Magnifier light />
          <Wave />
          <Clock>18:26</Clock>
        </Tray>
      </TaskBar>
    </Window>
  );
};

export default App;
